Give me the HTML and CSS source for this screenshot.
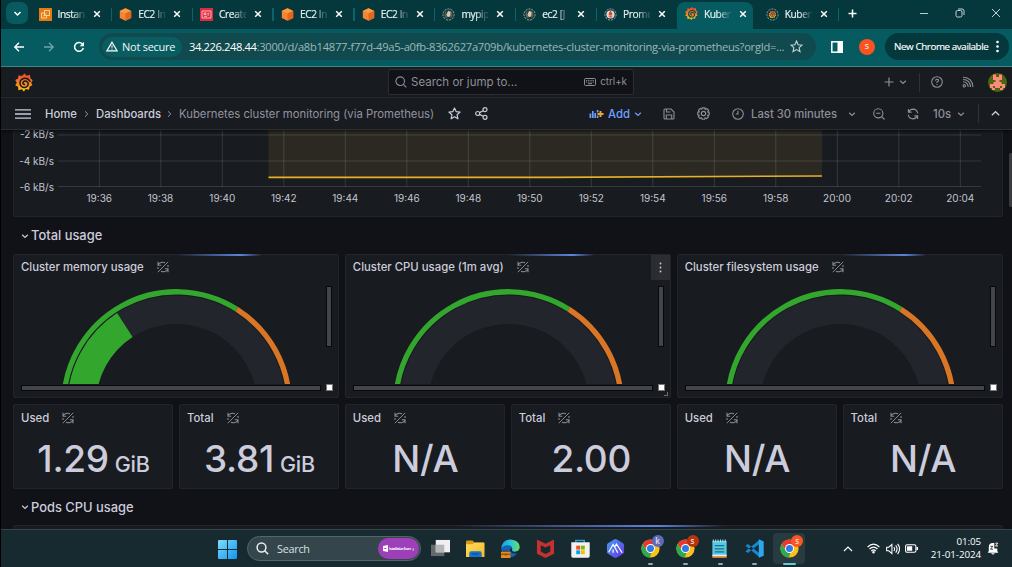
FILE: index.html
```html
<!DOCTYPE html>
<html lang="en">
<head>
<meta charset="utf-8">
<title>Kubernetes cluster monitoring</title>
<link rel="stylesheet" href="styles.css">
</head>
<body>
<svg class="defs" width="0" height="0" aria-hidden="true">
  <defs>
    <linearGradient id="gfire" x1="0" y1="0" x2="0" y2="1"><stop offset=".1" stop-color="#f0512c"/><stop offset=".55" stop-color="#f48424"/><stop offset="1" stop-color="#fbca0a"/></linearGradient>
    <linearGradient id="gwin" x1="0" y1="0" x2="1" y2="1"><stop offset="0" stop-color="#7fdcfa"/><stop offset="1" stop-color="#0f94f0"/></linearGradient>
    <linearGradient id="gfold" x1="0" y1="0" x2="1" y2="1"><stop offset="0" stop-color="#ffdc5e"/><stop offset="1" stop-color="#f5b92b"/></linearGradient>
    <linearGradient id="gedge" x1="0" y1="0" x2="1" y2="0"><stop offset="0" stop-color="#1e9be8"/><stop offset=".5" stop-color="#2bc3d8"/><stop offset="1" stop-color="#67df65"/></linearGradient>
    <linearGradient id="ghex" x1="0" y1="0" x2="1" y2="1"><stop offset="0" stop-color="#3fa0f5"/><stop offset="1" stop-color="#6a35e8"/></linearGradient>
  </defs>
  <symbol id="i-grafana" viewBox="0 0 24 24">
    <path fill="url(#gfire)" d="M12.800 0l2.800 3 4.400-1.400.4 4.600L23.600 9l-2 3.200 1.600 3.600-3.600 1.600-1 4.400-4.200-1L11.800 24l-2.600-2.900-4.600 1.100-.6-4.500L.3 15.800l2.100-3.400L.3 8.800l3.700-2 .6-4.400 4.500.8z"/>
    <path fill="none" stroke="currentColor" stroke-width="2" stroke-linecap="round" d="M20 10.400C18.500 7.500 16 6.200 13.200 6.300 9 6.500 6.500 9.600 6.700 13.200c.2 3.400 3 5.500 6 5.400 3-.1 5-2.300 4.900-4.800-.1-2.400-2-3.900-4.100-3.800-1.900.1-3 1.500-2.900 2.900.1 1.200 1 2 2.200 1.900"/>
  </symbol>
  <symbol id="i-x" viewBox="0 0 8 8"><path d="M1.200 1.200l5.600 5.600M6.800 1.200L1.200 6.800" fill="none" stroke="currentColor" stroke-width="1.500"/></symbol>
  <symbol id="i-ec2" viewBox="0 0 12 13"><path fill="#f58536" d="M6 .3l5.700 2.600v7L6 12.700.3 9.900v-7z"/><path fill="#fb9d3c" d="M6 .3l5.700 2.600L6 5.300.3 2.900z"/><path fill="#e2661e" d="M6 5.300l5.700-2.400v7L6 12.700z"/></symbol>
  <symbol id="i-down" viewBox="0 0 8 8"><path d="M1.200 2.700L4 5.400l2.800-2.700" fill="none" stroke="currentColor" stroke-width="1.200"/></symbol>
  <symbol id="i-jenkins" viewBox="0 0 14 14"><circle cx="7" cy="7" r="6" fill="none" stroke="#a4b2b2" stroke-width="1" stroke-dasharray="2.200 1.100"/><circle cx="7" cy="7" r="4.300" fill="#59615b"/><path fill="#d8c8ae" d="M5 4.500Q7 2.200 9 4.500v3Q8.500 10 7 10 5 9 5 7z"/><path fill="#292f30" d="M4.200 5Q5 2.300 7 3L5.700 4.500 5.200 7zM5.500 9.800L9.600 9.300l-.9 2.100H6z"/></symbol>
  <symbol id="i-norefresh" viewBox="0 0 12 12"><g fill="none" stroke="currentColor"><path d="M.8 11.200L11.200.8" stroke-width="1"/><path d="M1 .8v3.400h3.200M1.300 3.600C2.300 1.500 5.500.6 8 1.700M11 11.200V7.800H7.800M10.700 8.400C9.700 10.500 6.500 11.400 4 10.300M1 6v2M11 4v2" stroke-width="1.100"/></g></symbol>
  <symbol id="i-chrome" viewBox="0 0 20 20"><circle cx="10" cy="10" r="9.600" fill="#fbc116"/><path fill="#e33b2e" d="M1.700 5.200A9.600 9.600 0 0 1 18.300 5.200L10 6 6.200 12z"/><path fill="#2da94f" d="M1.700 5.200L6 12.300l5 2-1.700 5.300A9.600 9.600 0 0 1 1.700 5.200z"/><circle cx="10" cy="10" r="4.700" fill="#fff"/><circle cx="10" cy="10" r="3.700" fill="#3079ea"/></symbol>
</svg>

<div class="screen">
  <header class="tabs">
    <div class="tab-menu"><svg width="9" height="9"><path d="M1.500 3L4.500 6l3-3" fill="none" stroke="#fff" stroke-width="1.500"/></svg></div>
    <div class="tab"><svg class="fav" viewBox="0 0 13 13"><rect width="13" height="13" fill="#e27c12"/><path d="M5.500 2.500h5v5h-5zM5.500 5h-3v5h5V7.500M4 8.500l3.500-3.300" fill="none" stroke="#ffdcae" stroke-width=".9"/></svg><span class="name">Instan</span><svg class="x"><use href="#i-x"/></svg></div>
    <div class="tab"><svg class="fav"><use href="#i-ec2"/></svg><span class="name">EC2 In</span><svg class="x"><use href="#i-x"/></svg></div>
    <div class="tab"><svg class="fav" viewBox="0 0 13 13"><rect width="13" height="13" fill="#dc2b40"/><path d="M2 3h9v7H2zM4 5h2v1.500H4zM7.300 5.300h2M7.300 7h2M4 8.300h3" fill="none" stroke="#ffc4c9" stroke-width=".9"/></svg><span class="name">Create</span><svg class="x"><use href="#i-x"/></svg></div>
    <div class="tab"><svg class="fav"><use href="#i-ec2"/></svg><span class="name">EC2 In</span><svg class="x"><use href="#i-x"/></svg></div>
    <div class="tab"><svg class="fav"><use href="#i-ec2"/></svg><span class="name">EC2 In</span><svg class="x"><use href="#i-x"/></svg></div>
    <div class="tab"><svg class="fav"><use href="#i-jenkins"/></svg><span class="name">mypip</span><svg class="x"><use href="#i-x"/></svg></div>
    <div class="tab"><svg class="fav"><use href="#i-jenkins"/></svg><span class="name">ec2 [J</span><svg class="x"><use href="#i-x"/></svg></div>
    <div class="tab last"><svg class="fav" viewBox="0 0 14 14"><circle cx="7" cy="7" r="6" fill="none" stroke="#a4b2b2" stroke-dasharray="2.200 1.100"/><circle cx="7" cy="7" r="4.400" fill="#e6dcd8"/><path fill="#d34a2c" d="M7 2.800L8.700 5.400 9 8H5l.2-2.600zM5 8.600h4v.9H5zM6 10h2v.8H6z"/></svg><span class="name">Prome</span><svg class="x"><use href="#i-x"/></svg></div>
    <div class="tab active"><svg class="fav g"><use href="#i-grafana"/></svg><span class="name">Kuber</span><svg class="x"><use href="#i-x"/></svg></div>
    <div class="tab"><svg class="fav g" viewBox="0 0 14 14"><circle cx="7" cy="7" r="6" fill="none" stroke="#92a5a4" stroke-dasharray="2.200 1.100"/><use href="#i-grafana" x="2.700" y="2.700" width="8.600" height="8.600"/></svg><span class="name">Kuber</span><svg class="x"><use href="#i-x"/></svg></div>
    <svg class="newtab" viewBox="0 0 9 9"><path d="M4.500.5v8M.5 4.500h8" stroke="#fff" stroke-width="1.500"/></svg>
    <div class="win"><svg width="10" height="10"><path d="M1 5.500h8" stroke="#b8cccc"/></svg><svg width="10" height="10" fill="none" stroke="#c2d2d2"><rect x="1" y="2.500" width="6" height="6.500" rx="1.500"/><path d="M3 1h4q2 0 2 2v4"/></svg><svg width="10" height="10"><path d="M1 1l8 8M9 1L1 9" stroke="#c2d2d2"/></svg></div>
  </header>

  <div class="toolbar">
    <svg class="nav" viewBox="0 0 12 12"><path d="M11 6H2M6 1.800L1.800 6 6 10.200" fill="none" stroke="#fff" stroke-width="1.400"/></svg>
    <svg class="nav dim" viewBox="0 0 12 12"><path d="M1 6h9M6 1.800L10.200 6 6 10.200" fill="none" stroke="#6fa3a5" stroke-width="1.300"/></svg>
    <svg class="nav" viewBox="0 0 12 12"><path d="M10.300 7A4.400 4.400 0 1 1 9.300 3L10.300 4.200" fill="none" stroke="#fff" stroke-width="1.500"/><path fill="#fff" d="M11 .8v4.400H6.700z"/></svg>
    <div class="url">
      <div class="chip"><svg width="12" height="11" viewBox="0 0 12 11"><path d="M6 1.200L11 9.800H1z" fill="none" stroke="#fff" stroke-width="1.200"/><path d="M6 4.200v2.700M6 7.600v1.100" stroke="#fff"/></svg><span>Not secure</span></div>
      <span class="addr"><b>34.226.248.44</b>:3000/d/a8b14877-f77d-49a5-a0fb-8362627a709b/kubernetes-cluster-monitoring-via-prometheus?orgId=...</span>
      <svg class="star" viewBox="0 0 13 13"><path d="M6.500 1l1.600 3.700 4 .4-3 2.600.9 4-3.500-2.100L3 11.700l.9-4-3-2.600 4-.4z" fill="none" stroke="#c3d5d5" stroke-width="1.100"/></svg>
    </div>
    <svg class="side" viewBox="0 0 12 12"><rect x=".8" y=".8" width="10.400" height="10.400" fill="none" stroke="#fff" stroke-width="1.500"/><path fill="#fff" d="M6.500 0H12v12H6.500z"/></svg>
    <div class="me">s</div>
    <div class="update"><span>New Chrome available</span><svg width="3" height="13"><g fill="#fff"><circle cx="1.500" cy="2" r="1.300"/><circle cx="1.500" cy="6.500" r="1.300"/><circle cx="1.500" cy="11" r="1.300"/></g></svg></div>
  </div>

  <div class="topbar">
    <svg class="logo"><use href="#i-grafana"/></svg>
    <div class="search"><svg width="12" height="12" fill="none" stroke="currentColor" stroke-width="1.100"><circle cx="5.200" cy="5.200" r="4.300"/><path d="M8.300 8.300L11.400 11.400"/></svg><span class="ph">Search or jump to...</span><svg width="12" height="8" fill="none" stroke="currentColor"><rect x=".5" y=".5" width="11" height="7" rx="1"/><path d="M2 2.500h8M2 4.100h8" stroke-dasharray="1 .8"/><path d="M4 5.700h4"/></svg><span class="key">ctrl+k</span></div>
    <div class="top-actions">
      <svg width="10" height="10"><path d="M5 .5v9M.5 5h9" stroke="currentColor" stroke-width="1.200"/></svg>
      <svg class="ch"><use href="#i-down"/></svg>
      <i class="sep"></i>
      <svg class="help" width="12" height="12" fill="none" stroke="currentColor" stroke-width="1.100"><circle cx="6" cy="6" r="5.300"/><path d="M4.500 4.800Q4.600 3.200 6.100 3.200 7.600 3.300 7.500 4.700 7.300 5.600 6 6v1M6 8v1.100"/></svg>
      <svg class="rss" width="12" height="12" fill="none" stroke="currentColor" stroke-width="1.100"><circle cx="2.300" cy="9.700" r="1.200"/><path d="M1 5.800Q5.800 6 6.200 11M1 3.500Q8 3.500 8.500 11M1 1.200Q10.500 1.500 10.900 11"/></svg>
      <svg class="avatar" viewBox="0 0 19 19"><circle cx="9.500" cy="9.500" r="9.500" fill="#4a6611"/><path fill="#ff8a7c" d="M5 1.500h3V4h3V1.500h3V7h-2.500v2h2v2H17v4h-2v2h-3v-2h2v-2h-2v2H7v-2H5v2h2v2H4v-2H2v-4h3.500V9h2V7H5z"/></svg>
    </div>
  </div>

  <div class="crumbs">
    <svg class="burger" viewBox="0 0 16 10"><path d="M0 .8h16M0 5h16M0 9.200h16" stroke="#ccccdc" stroke-width="1.300"/></svg>
    <span class="c1">Home</span><svg class="gt" viewBox="0 0 5 8"><path d="M1 1.300L3.800 4 1 6.700" fill="none" stroke="#9696a3"/></svg><span class="c2">Dashboards</span><svg class="gt" viewBox="0 0 5 8"><path d="M1 1.300L3.800 4 1 6.700" fill="none" stroke="#9696a3"/></svg><span class="c3">Kubernetes cluster monitoring (via Prometheus)</span>
    <svg class="fave" viewBox="0 0 13 13"><path d="M6.500 1l1.600 3.600 4 .5-3 2.700.8 4-3.400-2-3.400 2 .8-4-3-2.700 4-.5z" fill="none" stroke="#ccccdc" stroke-width="1.200" stroke-linejoin="round"/></svg>
    <svg class="share" viewBox="0 0 13 13" fill="none" stroke="#ccccdc" stroke-width="1.200"><circle cx="2.700" cy="6.500" r="2"/><circle cx="10" cy="2.700" r="2"/><circle cx="10" cy="10.300" r="2"/><path d="M4.500 5.600L8.200 3.700M4.500 7.400l3.700 1.900"/></svg>
    <div class="add"><svg width="15" height="12"><path d="M1.400 10V5.500M3.800 10V3M6.200 10V5M8.600 10V7.500M8.600 4.500V2" stroke="#6e9fff" stroke-width="1.700"/><path d="M11.500 3v6M8.500 6h6" stroke="#f2a238" stroke-width="1.900"/></svg><span>Add</span><svg class="ch"><use href="#i-down"/></svg></div>
    <svg class="save" viewBox="0 0 12 12" fill="none" stroke="currentColor" stroke-width="1.100"><path d="M1 2Q1 1 2 1h6l3 3v6q0 1-1 1H2q-1 0-1-1zM3.500 1v3h4M3.300 11V7h5.400v4"/></svg>
    <svg class="cog" viewBox="0 0 12 12" fill="none" stroke="currentColor" stroke-width="1.100"><path d="M4.800.8h2.400l.4 1.400 1.500-.7 1.500 1.500-.7 1.500 1.300.4v2.300l-1.400.5.7 1.400-1.600 1.600-1.400-.7-.4 1.300H4.800l-.5-1.400-1.400.7-1.600-1.600.7-1.400-1.300-.4V4.800l1.400-.4-.7-1.400L3 1.400l1.400.7z"/><circle cx="6" cy="6" r="2"/></svg>
    <div class="time"><svg width="12" height="12" fill="none" stroke="currentColor" stroke-width="1.100"><circle cx="6" cy="6" r="5.300"/><path d="M6 2.700V6H3.800"/></svg><span>Last 30 minutes</span><svg class="ch"><use href="#i-down"/></svg></div>
    <svg class="zoom" viewBox="0 0 12 12" fill="none" stroke="currentColor" stroke-width="1.100"><circle cx="5.300" cy="5.300" r="4.600"/><path d="M3.200 5.300h4.200M8.700 8.700l2.800 2.800"/></svg>
    <svg class="refresh" viewBox="0 0 13 13" fill="none" stroke="currentColor" stroke-width="1.200"><path d="M1.500 1v3.500H5M1.800 4.200Q3.500 1.200 6.500 1.200 10.800 1.300 11.700 5.800M11.500 12V8.500H8M11.200 8.800Q9.500 11.800 6.500 11.800 2.200 11.700 1.300 7.200"/></svg>
    <span class="ten">10s</span><svg class="ch tc"><use href="#i-down"/></svg>
    <i class="sep s2"></i>
    <svg class="up" viewBox="0 0 9 7"><path d="M.8 5.300L4.500 1.700l3.700 3.600" fill="none" stroke="#ccccdc" stroke-width="1.200"/></svg>
  </div>

  <main class="canvas">
    <section class="panel chart">
      <svg width="988" height="87" viewBox="14 130 988 87">
        <path fill="#2c2922" d="M268.500 130H822v46L545 177.500H268.500z"/>
        <path stroke="#dfe5d8" stroke-opacity=".15" fill="none" d="M58 135H981M58 161H981M58 186.500H981M99.300 130v57M160.800 130v57M222.300 130v57M283.800 130v57M345.300 130v57M406.800 130v57M468.300 130v57M529.800 130v57M591.300 130v57M652.800 130v57M714.300 130v57M775.800 130v57M837.300 130v57M898.800 130v57M960.300 130v57"/>
        <path stroke="#e6b029" stroke-width="1.600" fill="none" d="M268.500 177.400H550L822 176"/>
        <g class="axis"><text x="54" y="138.300" text-anchor="end">-2 kB/s</text><text x="54" y="164.600" text-anchor="end">-4 kB/s</text><text x="54" y="190.500" text-anchor="end">-6 kB/s</text></g>
        <g class="axis" text-anchor="middle"><text x="99.300" y="202">19:36</text><text x="160.500" y="202">19:38</text><text x="222.300" y="202">19:40</text><text x="283.800" y="202">19:42</text><text x="345.300" y="202">19:44</text><text x="406.800" y="202">19:46</text><text x="468.300" y="202">19:48</text><text x="529.800" y="202">19:50</text><text x="591.300" y="202">19:52</text><text x="652.800" y="202">19:54</text><text x="714.300" y="202">19:56</text><text x="775.800" y="202">19:58</text><text x="837" y="202">20:00</text><text x="898.700" y="202">20:02</text><text x="960.300" y="202">20:04</text></g>
      </svg>
    </section>

    <h2 class="row"><svg class="rc"><use href="#i-down"/></svg>Total usage</h2>

    <div class="gauges">
      <section class="panel gauge">
        <i class="load"></i>
        <h3>Cluster memory usage<svg class="nr"><use href="#i-norefresh"/></svg></h3>
        <div class="dial"><svg width="299" height="104" viewBox="-155.500 -124.500 299 104">
          <circle r="94.800" fill="none" stroke="#22252b" stroke-width="28.500"/>
          <path fill="#33a62e" d="M-59.400-91.400A109 109 0 0 0-109 0H-80.500A80.500 80.500 0 0 1-43.900-67.500z"/>
          <path d="M-112.800 0A112.800 112.800 0 0 1 60.300-95.300" fill="none" stroke="#33a62e" stroke-width="5.300"/><path d="M60.300-95.300A112.800 112.800 0 0 1 112.800 0" fill="none" stroke="#d97626" stroke-width="5.300"/>
        </svg><i class="vbar"></i></div>
        <div class="hscroll"><i class="hbar"></i><i class="knob"></i></div>
      </section>
      <section class="panel gauge">
        <i class="load"></i>
        <h3>Cluster CPU usage (1m avg)<svg class="nr"><use href="#i-norefresh"/></svg></h3>
        <div class="menu"><svg width="3" height="11"><g fill="#ccccdc"><circle cx="1.500" cy="1.500" r=".9"/><circle cx="1.500" cy="5.500" r=".9"/><circle cx="1.500" cy="9.500" r=".9"/></g></svg></div>
        <div class="dial"><svg width="299" height="104" viewBox="-155.500 -124.500 299 104">
          <circle r="94.800" fill="none" stroke="#22252b" stroke-width="28.500"/>
          <path d="M-112.800 0A112.800 112.800 0 0 1 60.300-95.300" fill="none" stroke="#33a62e" stroke-width="5.300"/><path d="M60.300-95.300A112.800 112.800 0 0 1 112.800 0" fill="none" stroke="#d97626" stroke-width="5.300"/>
        </svg><i class="vbar"></i></div>
        <div class="hscroll"><i class="hbar"></i><i class="knob"></i></div>
        <i class="resize"></i>
      </section>
      <section class="panel gauge">
        <i class="load"></i>
        <h3>Cluster filesystem usage<svg class="nr"><use href="#i-norefresh"/></svg></h3>
        <div class="dial"><svg width="299" height="104" viewBox="-155.500 -124.500 299 104">
          <circle r="94.800" fill="none" stroke="#22252b" stroke-width="28.500"/>
          <path d="M-112.800 0A112.800 112.800 0 0 1 60.300-95.300" fill="none" stroke="#33a62e" stroke-width="5.300"/><path d="M60.300-95.300A112.800 112.800 0 0 1 112.800 0" fill="none" stroke="#d97626" stroke-width="5.300"/>
        </svg><i class="vbar"></i></div>
        <div class="hscroll"><i class="hbar"></i><i class="knob"></i></div>
      </section>
    </div>

    <div class="stats">
      <section class="panel stat"><h3>Used<svg class="nr"><use href="#i-norefresh"/></svg></h3><p>1.29<small>GiB</small></p></section>
      <section class="panel stat"><h3>Total<svg class="nr"><use href="#i-norefresh"/></svg></h3><p>3.81<small>GiB</small></p></section>
      <section class="panel stat"><h3>Used<svg class="nr"><use href="#i-norefresh"/></svg></h3><p>N/A</p></section>
      <section class="panel stat"><h3>Total<svg class="nr"><use href="#i-norefresh"/></svg></h3><p>2.00</p></section>
      <section class="panel stat"><h3>Used<svg class="nr"><use href="#i-norefresh"/></svg></h3><p>N/A</p></section>
      <section class="panel stat"><h3>Total<svg class="nr"><use href="#i-norefresh"/></svg></h3><p>N/A</p></section>
    </div>

    <h2 class="row pods"><svg class="rc"><use href="#i-down"/></svg>Pods CPU usage</h2>
    <section class="panel next"><i class="load wide"></i></section>
    <i class="page-scroll"></i>
  </main>

  <footer class="taskbar">
    <svg class="start" viewBox="0 0 19 19"><path fill="url(#gwin)" d="M1 0h8v9H0V1q0-1 1-1zM10 0h8q1 0 1 1v8h-9zM0 10h9v9H1q-1 0-1-1zM10 10h9v8q0 1-1 1h-8z"/></svg>
    <div class="tsearch"><svg width="13" height="13" fill="none" stroke="#e8eeee" stroke-width="1.500"><circle cx="5.500" cy="5.500" r="4.400"/><path d="M8.700 8.700l3.400 3.400"/></svg><span>Search</span>
      <div class="promo"><svg width="5" height="7"><path fill="#fff" d="M0 1l5-1v7L0 6z"/><path d="M1.300 3.500h2" stroke="#9c3fb8"/></svg><span>Installation Score</span><b>›</b></div></div>
    <div class="apps">
      <div class="app"><svg viewBox="0 0 20 20"><rect x="0" y="6" width="14" height="12" fill="#66696b"/><rect x="5" y="1" width="15" height="13" fill="#f0f0f0"/><path fill="#b4b6b7" d="M5 6h9v8H5z"/></svg></div>
      <div class="app"><svg viewBox="0 0 20 20"><path fill="#d99a13" d="M0 3q0-1.500 1.500-1.500H7L9 4h9v4H0z"/><path fill="url(#gfold)" d="M0 5.500h7L9 3.700h9.500q1 0 1 1V19H0z"/><path fill="#1473c8" d="M3.500 19v-4q0-2 2-2h9q2 0 2 2v4z"/><path d="M6.500 15.700h7" stroke="#0b4a91" stroke-width="1.200"/></svg></div>
      <div class="app"><svg viewBox="0 0 20 20"><path fill="#1263b6" d="M.3 10Q1 4 9 4.200l5 4L9 11q1 5 8 4-3 4.500-8 4.200Q.5 18 .3 10z"/><path fill="url(#gedge)" d="M.3 10Q1 .8 10.200.5 19.200 1 19.700 8.500q-.3 5-6 4.800-2.700-.2-2-2 .7-4.300-4-4.700Q3 6.500.3 10z"/><path fill="#e68a1a" d="M0 13.500h10V20H0z"/><path d="M3 13.500v-1h4v1M0 16h10M5 15.500v2" fill="none" stroke="#713e0b"/></svg></div>
      <div class="app"><svg viewBox="0 0 20 20"><path fill="#c6302e" d="M1 .5L10 5l9-4.500v15L10 20 1 15.500zM5 6.500v6.700l5 2.600 5-2.600V6.500L10 9z" fill-rule="evenodd"/></svg></div>
      <div class="app"><svg viewBox="0 0 20 20"><path d="M5 4V1.500h9V4" fill="none" stroke="#27a4d5" stroke-width="1.500"/><path fill="#f1f1f1" d="M.3 3.500h19.400V18q0 1.700-1.700 1.700H2Q.3 19.700.3 18z"/><path fill="#f25022" d="M5.500 7H9.600v4.100H5.500z"/><path fill="#7fba00" d="M10.400 7h4.100v4.100h-4.100z"/><path fill="#00a4ef" d="M5.500 11.900h4.100V16H5.500z"/><path fill="#ffb900" d="M10.400 11.900h4.100V16h-4.100z"/></svg></div>
      <div class="app"><svg viewBox="0 0 20 20"><path fill="url(#ghex)" d="M10 0q1 0 8 4.500l1 1.500v8l-1 1.500Q11 20 10 20T2 15.500L1 14V6l1-1.500Q9 0 10 0z"/><path d="M2.800 14L7.500 5.800l4.900 8.700M7.500 11v3.500M9 8.500l2-3.200L17 14.500M11 5.300l2 3" fill="none" stroke="#fff" stroke-width="1.300"/></svg></div>
      <div class="app run"><svg><use href="#i-chrome"/></svg><b class="badge k">k</b></div>
      <div class="app run"><svg><use href="#i-chrome"/></svg><b class="badge d">s</b></div>
      <div class="app run"><svg viewBox="0 0 20 20"><path fill="#57c9e2" d="M2.500 2h15v16h-15z"/><path fill="#d17a33" d="M2.500 17.500h15V20h-15z"/><path fill="#e8eef0" d="M2.500 16.500h15v1.700h-15z"/><path d="M3 2h14" stroke="#c5eef7" stroke-width="3" stroke-dasharray="1 1.500"/><path d="M5 7h10M5 10.300h10M5 13.500h10" stroke="#19728c" stroke-width="1.300"/></svg></div>
      <div class="app run"><svg viewBox="0 0 20 20"><path d="M.5 7L3 5.300 15 14.800V19zM.5 13l2.500 1.700L15 5.200V1z" fill="#1687cf"/><path fill="#2fa5ee" d="M14.500.3L19.700 2.500v15l-5.200 2.200z"/></svg></div>
      <div class="app run on"><svg><use href="#i-chrome"/></svg><b class="badge o">s</b></div>
    </div>
    <div class="tray">
      <svg class="tup" viewBox="0 0 10 6"><path d="M1 5l4-4 4 4" fill="none" stroke="#fff" stroke-width="1.200"/></svg>
      <svg class="wifi" viewBox="0 0 13 11" fill="none" stroke="#fff" stroke-width="1.100"><path d="M.6 4Q6.500-1.600 12.400 4M2.500 6Q6.500 2.200 10.500 6M4.300 8Q6.500 5.800 8.700 8"/><circle cx="6.500" cy="9.300" r=".7" fill="#fff"/></svg>
      <svg class="vol" viewBox="0 0 13 11" fill="none" stroke="#fff" stroke-width="1"><path d="M.6 3.800h2L5.500 1.200v8.600L2.600 7.200h-2zM7.300 3.700q1.400 1.800 0 3.600M9 2.200q2.600 3.300 0 6.600M10.800.8q3.500 4.700 0 9.400"/></svg>
      <svg class="bat" viewBox="0 0 13 9"><rect x=".6" y=".8" width="10.300" height="7.400" rx="1.500" fill="none" stroke="#fff" stroke-width="1.100"/><path fill="#fff" d="M2 2.200h5.200v4.600H2zM11.500 3H13v3h-1.500z"/></svg>
      <div class="clock"><span>01:05</span><span>21-01-2024</span></div>
      <svg class="bell" viewBox="0 0 12 13"><path fill="#fff" d="M1.800 9V5q0-3.800 4-4h1.500v5.500h3V9l1 1.800H.7zM4 11.200h4Q6 14 4 11.200z"/><path d="M8.300 1.200h2.500L8.500 4H11" fill="none" stroke="#fff" stroke-width=".9"/><path d="M3.300 4.300h2.500L3.500 7.200H6" fill="none" stroke="#20343a" stroke-width=".9"/></svg>
    </div>
  </footer>
</div>
</body>
</html>
```
FILE: styles.css
```css
* { box-sizing: border-box; }
body { margin: 0; background: #000; overflow: hidden; }
svg { display: block; flex: none; }
i { display: block; font-style: normal; }
h2, h3, p { margin: 0; }
.defs { position: absolute; }
.screen { width: 1012px; height: 567px; padding-left: 1px; display: flex; flex-direction: column; overflow: hidden; font-family: Inter, sans-serif; color: #ccccdc; }
.screen > * { flex: none; }

/* browser tabs */
.tabs { height: 29px; background: #04383c; display: flex; align-items: center; padding-left: 5px; font: 10.200px "Open Sans", sans-serif; color: #e4eeee; }
.tab-menu { width: 22px; height: 22px; border-radius: 7px; background: #075a5e; display: grid; place-items: center; margin: -3px 2.500px 0 0; }
.tab { width: 80.800px; height: 23px; padding: 0 0 3px 8px; margin-top: 2px; display: flex; align-items: center; position: relative; flex: none; }
.tab::after { content: ""; position: absolute; right: -1px; top: 4px; width: 1.500px; height: 13px; background: #0b6467; }
.tab.last::after, .tab.active::after { display: none; }
.tab .fav { width: 13px; height: 13px; margin-right: 6px; }
.tab .fav.g { color: #04484d; }
.tab .name { width: 27px; white-space: nowrap; letter-spacing: -.4px; margin-right: 8px; -webkit-mask-image: linear-gradient(90deg, #000 55%, #0003 90%); mask-image: linear-gradient(90deg, #000 55%, #0003 90%); -webkit-text-stroke: .2px currentColor; }
.tab .x { width: 8px; height: 8px; color: #fff; }
.tab.active { height: 27px; width: 76px; margin-right: 4.800px; padding-bottom: 4px; background: #055b60; border-radius: 8px 8px 0 0; }
.newtab { width: 9px; height: 9px; margin: -3px 0 0 9.500px; }
.win { flex: 1; display: flex; justify-content: flex-end; gap: 26px; padding-right: 11px; margin-top: -3px; }

.toolbar { height: 38px; background: #055b60; border-bottom: 1.500px solid #3e8587; display: flex; align-items: center; padding: 0 3px 2px 12px; font-family: "Open Sans", sans-serif; }
.nav { width: 12px; height: 12px; margin-right: 18px; }
.nav + .nav + .nav { margin-right: 14px; }
.url { width: 717px; height: 27px; border-radius: 14px; background: #114a4e; display: flex; align-items: center; padding-left: 3px; }
.chip { width: 80px; height: 20px; border-radius: 10px; background: #095d61; display: flex; align-items: center; gap: 4px; padding-left: 4px; font-size: 11px; color: #f0f8f8; letter-spacing: -.25px; white-space: nowrap; }
.addr { width: 598px; margin-left: 7px; font-size: 11.200px; letter-spacing: -.28px; color: #9bb8b9; white-space: nowrap; }
.addr b { color: #fff; font-weight: 400; letter-spacing: -.4px; }
.star { width: 13px; height: 13px; margin-left: 3px; }
.side { width: 12px; height: 12px; margin-left: 14.500px; }
.me { width: 16px; height: 16px; border-radius: 50%; background: #fa5220; color: #fff; font-size: 9px; line-height: 14px; text-align: center; margin-left: 16.500px; }
.update { margin-left: auto; width: 124px; height: 27px; border-radius: 14px; background: #04383c; display: flex; align-items: center; justify-content: space-between; padding: 0 10px 0 9px; font-size: 9.800px; color: #fff; letter-spacing: -.4px; white-space: nowrap; -webkit-text-stroke: .15px currentColor; }

/* application header */
.topbar { height: 31px; background: #181b1f; border-bottom: 1px solid #2b2d33; display: flex; align-items: center; color: #8e8e9a; }
.logo { width: 18px; height: 19px; margin-left: 13.500px; color: #181b1f; }
.search { margin: -1px 0 0 355.500px; width: 246px; height: 26px; background: #111217; border: 1px solid #2b2d33; border-radius: 2px; display: flex; align-items: center; padding: 0 6px; font-size: 11.500px; }
.search .ph { margin-left: 4px; flex: 1; }
.search .key { font-size: 9.800px; margin-left: 4px; }
.top-actions { flex: 1; display: flex; align-items: center; justify-content: flex-end; padding-right: 5px; }
.ch { width: 8px; height: 8px; }
.top-actions .ch { margin-left: 5px; }
.sep { width: 1px; height: 19px; background: #303239; }
.top-actions .sep { margin: 0 11px 0 12px; }
.rss { margin: 0 14px 0 19px; }
.avatar { width: 19px; height: 19px; }
.crumbs { height: 32px; background: #181b1f; border-bottom: 1px solid #2b2d33; display: flex; align-items: center; padding-left: 14px; font-size: 11.300px; font-weight: 500; color: #8e8e9a; white-space: nowrap; box-shadow: 0 1px 3px #0009; position: relative; z-index: 1; }
.burger { width: 16px; height: 10px; margin-right: 14px; }
.c1 { width: 39px; color: #ccccdc; }
.c2 { width: 71px; color: #ccccdc; }
.c3 { width: 269px; font-weight: 400; color: #9393a0; }
.gt { width: 5px; height: 8px; margin: 1px 7px 0 0; }
.c2 + .gt { margin-right: 0; }
.c3 { margin-left: 7px; }
.fave { width: 13px; height: 13px; }
.share { width: 13px; height: 13px; margin-left: 14px; }
.add { width: 53px; margin-left: 101px; display: flex; align-items: center; gap: 4px; color: #6e9fff; }
.save { width: 12px; height: 12px; margin-left: 21px; }
.cog { width: 13px; height: 13px; margin-left: 22px; }
.time { width: 124px; margin-left: 22px; display: flex; align-items: center; }
.time span { margin-left: 7px; flex: 1; }
.zoom { width: 12px; height: 12px; margin-left: 17px; }
.refresh { width: 12px; height: 12px; margin: 0 14px 0 22px; }
.ten { width: 24px; }
.s2 { margin: 0 12px 0 13px; }
.up { width: 9px; height: 7px; }

/* dashboard */
.canvas { height: 399px; background: #111217; overflow: hidden; padding: 0 9.500px 0 12px; position: relative; }
.panel { background: #181b1f; border: 1px solid #222429; border-radius: 2px; min-width: 0; }
.chart { height: 87px; border-top: 0; }
.axis { font: 10px Inter, sans-serif; fill: #c4c4d2; }
.row { height: 37px; display: flex; align-items: center; font-size: 12.900px; font-weight: 500; padding-left: 7.500px; color: #ccccdc; }
.rc { width: 8px; height: 8px; margin-right: 2.500px; }
.gauges { display: grid; grid-template-columns: repeat(3, minmax(0, 1fr)); gap: 6px; }
.gauge { height: 144px; position: relative; padding: 5px 0 0 7px; }
.panel h3 { display: flex; align-items: center; height: 14px; font-size: 11.350px; font-weight: 500; white-space: nowrap; }
.nr { width: 12px; height: 12px; margin-left: 13px; color: #898994; }
.load { position: absolute; top: -1px; left: 162px; width: 86px; height: 1.500px; background: linear-gradient(90deg, transparent, #5c84dc 75%, transparent); }
.dial { height: 110px; display: flex; }
.dial > svg { margin-top: 6px; }
.vbar { width: 6px; height: 61px; margin: 12px 0 0 6px; background: #44444f; border: .5px solid #08090b; }
.hscroll { height: 7px; display: flex; align-items: center; }
.hbar { width: 300px; height: 6px; background: #44444f; border: .5px solid #08090b; }
.knob { width: 7px; height: 7px; margin-left: 5px; background: #fff; border: .5px solid #777; }
.menu { position: absolute; right: 0; top: 0; width: 19px; height: 25px; background: #2c2d32; display: grid; place-items: center; }
.resize { position: absolute; right: 2px; bottom: 1px; width: 4px; height: 4px; border: solid #6b6c73; border-width: 0 1.500px 1.500px 0; }
.stats { display: grid; grid-template-columns: repeat(6, minmax(0, 1fr)); gap: 6px; margin-top: 6px; }
.stat { height: 85px; padding: 6px 6px 0 7px; }
.stat p { height: 64px; display: flex; justify-content: center; align-items: baseline; font-size: 37px; font-weight: 500; line-height: 68px; letter-spacing: -.3px; }
.stat small { font-size: 21.500px; margin-left: 6px; line-height: 1; }
.pods { height: 36px; }
.next { height: 10px; position: relative; }
.load.wide { left: 440px; width: 270px; }
.page-scroll { position: absolute; right: 0; top: 23px; width: 3px; height: 54px; background: #3a3b3f; border-radius: 2px 0 0 2px; }

/* desktop taskbar */
.taskbar { height: 38px; background: linear-gradient(90deg, #162a30, #182a30); border-top: 1.500px solid #35474b; display: flex; align-items: center; padding-left: 217px; font-family: "Open Sans", sans-serif; color: #fff; }
.start { width: 19px; height: 19px; margin-top: 1px; }
.tsearch { width: 174px; height: 25px; margin: 0 0 0 10px; border: 1px solid #52666a; border-radius: 13px; background: #34464b; display: flex; align-items: center; padding: 0 1px 0 8px; font-size: 10.800px; }
.tsearch > span { margin-left: 8px; color: #dae1e2; letter-spacing: -.25px; }
.promo { margin-left: auto; width: 41px; height: 21px; border-radius: 11px; background: #9c3fb8; display: flex; align-items: center; padding: 0 5px; gap: 1px; }
.promo span { font-size: 3px; font-weight: 700; white-space: nowrap; flex: 1; letter-spacing: -.25px; }
.promo b { font-size: 5px; }
.apps { display: flex; margin-left: 2px; }
.app { width: 34.950px; height: 37px; display: grid; place-items: center; position: relative; }
.app svg { width: 19px; height: 19px; position: relative; z-index: 1; }
.app.run::after { content: ""; position: absolute; left: 15px; bottom: 2px; width: 5px; height: 2.500px; border-radius: 2px; background: #9aa5a7; }
.app.on::before { content: ""; position: absolute; left: 1px; top: 3px; width: 32px; height: 31px; border-radius: 4px; background: #283b40; }
.app.run.on::after { left: 11px; width: 13px; background: #62cbd6; }
.badge { position: absolute; z-index: 2; right: 4px; top: 5px; width: 12px; height: 12px; border-radius: 50%; font-size: 8px; line-height: 11px; text-align: center; font-weight: 600; color: #f4dcd5; }
.k { background: #5c6bbd; }
.d { background: #b9330d; }
.o { background: #fb5523; }
.tray { flex: 1; display: flex; align-items: center; justify-content: flex-end; padding-right: 13px; }
.tup { width: 10px; height: 6px; margin-right: 14px; }
.wifi { width: 13px; height: 11px; margin-right: 6px; }
.vol { width: 14px; height: 12px; margin-right: 5px; }
.bat { width: 13px; height: 9px; }
.clock { width: 63px; display: flex; flex-direction: column; align-items: flex-end; font-size: 9.800px; line-height: 12.500px; letter-spacing: -.08px; white-space: nowrap; }
.bell { width: 12px; height: 13px; margin-left: 6px; }
```
